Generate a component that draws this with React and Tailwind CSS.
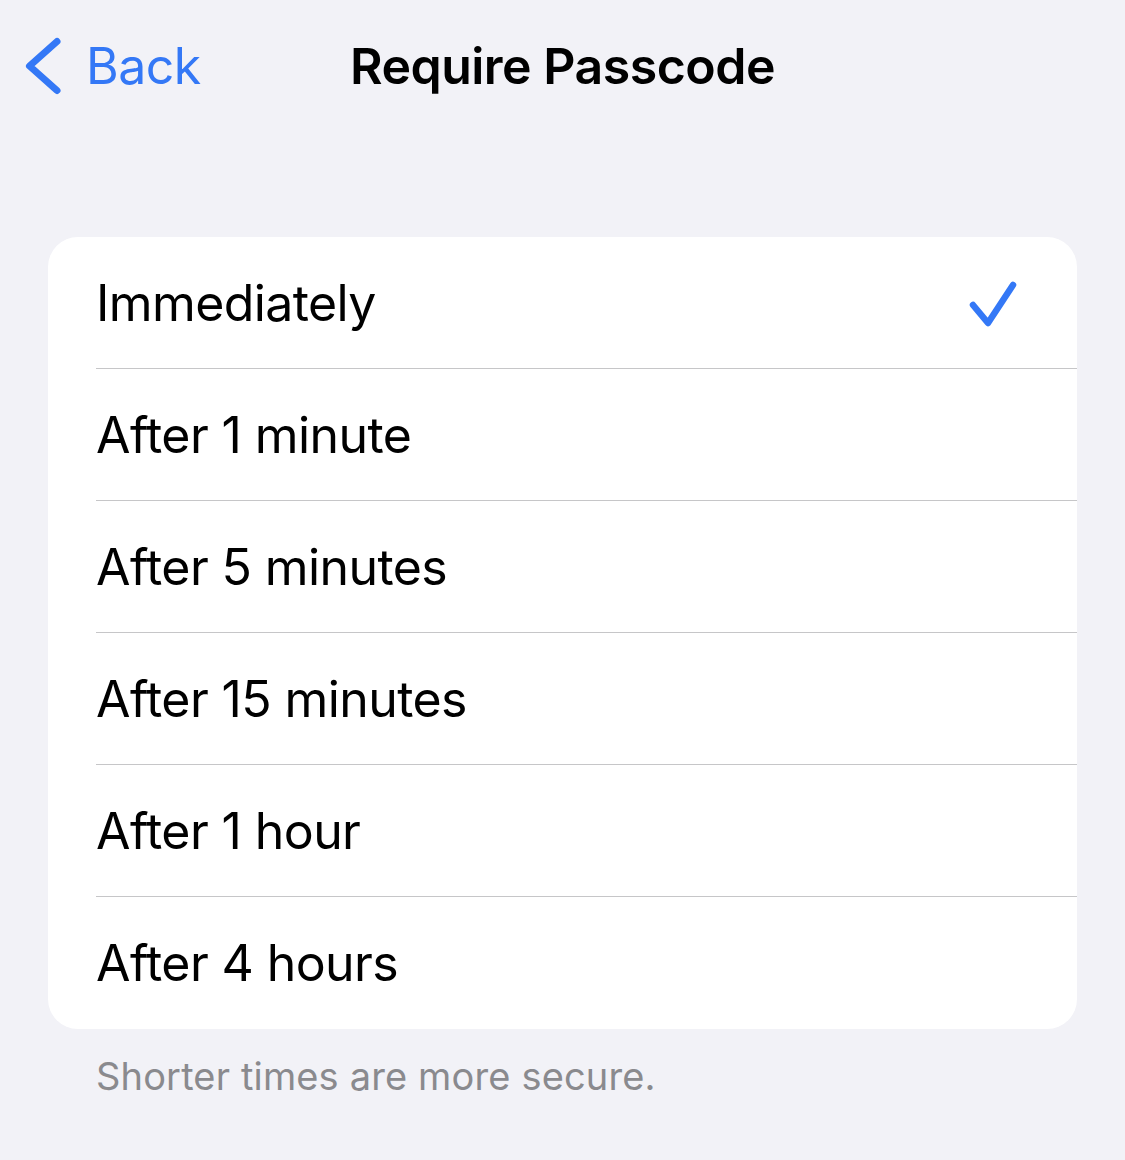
import React, { useState } from 'react';

const options = [
  'Immediately',
  'After 1 minute',
  'After 5 minutes',
  'After 15 minutes',
  'After 1 hour',
  'After 4 hours',
];

const App = () => {
  const [selected, setSelected] = useState(0);

  return (
    <div
      className="min-h-[1160px] w-full bg-[#f2f2f7] text-black"
      style={{ fontFamily: 'Inter, "Noto Sans", "Liberation Sans", sans-serif' }}
    >
      {/* Nav bar */}
      <div className="grid h-[132px] grid-cols-[1fr_auto_1fr] items-center">
        <button className="flex items-center gap-[22px] pl-[24px] text-[#3478f6]">
          <svg width="40" height="60" viewBox="0 0 40 60" fill="none">
            <path
              d="M33 5.5 L5.5 30 L33 54.5"
              stroke="currentColor"
              strokeWidth="7"
              strokeLinecap="round"
              strokeLinejoin="round"
            />
          </svg>
          <span className="text-[50px] leading-none tracking-[-0.5px]">Back</span>
        </button>
        <h1 className="text-[50px] font-semibold leading-none tracking-[-0.5px]">Require Passcode</h1>
        <div />
      </div>

      {/* Options list */}
      <div className="mx-[48px] mt-[105px] overflow-hidden rounded-[30px] bg-white">
        {options.map((label, i) => (
          <div key={label} className="pl-[48px]" onClick={() => setSelected(i)}>
            <div
              className={`flex h-[132px] items-center justify-between pr-[58px] ${
                i < options.length - 1 ? 'border-b border-[#c6c6c8]' : ''
              }`}
            >
              <span className="text-[50px] leading-none tracking-[-0.6px]">{label}</span>
              {selected === i && (
                <svg width="52" height="52" viewBox="0 0 52 52" fill="none" className="text-[#3478f6]">
                  <path
                    d="M6 28 L21 46 L46 8"
                    stroke="currentColor"
                    strokeWidth="6.5"
                    strokeLinecap="round"
                    strokeLinejoin="round"
                  />
                </svg>
              )}
            </div>
          </div>
        ))}
      </div>

      <p className="mt-[24px] pl-[96px] text-[38px] leading-[46px] tracking-[0.15px] text-[#8a8a8e]">
        Shorter times are more secure.
      </p>
    </div>
  );
};

export default App;
